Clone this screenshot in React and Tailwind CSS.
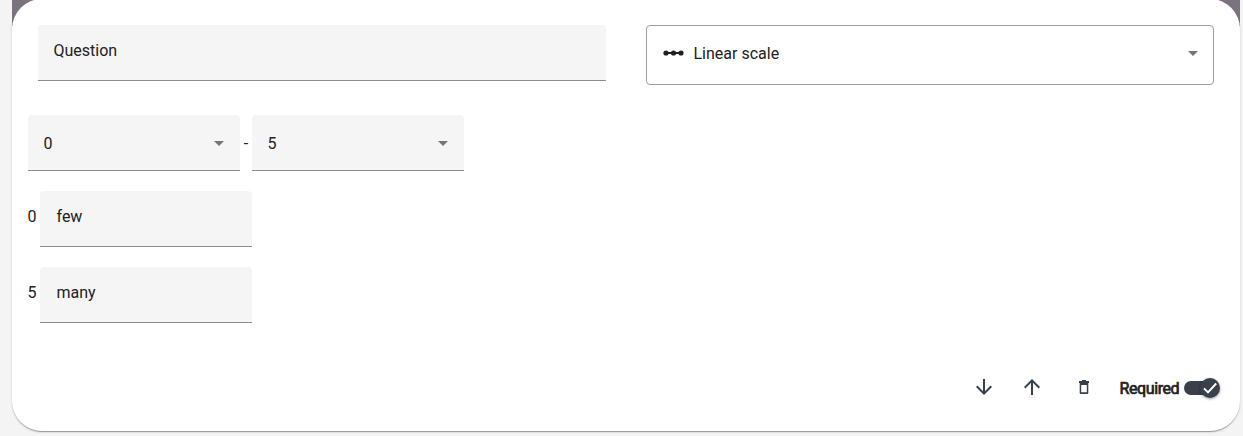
import React from "react";

function Caret({ className = "" }) {
  return (
    <svg width="10" height="5" viewBox="0 0 10 5" className={`shrink-0 ${className}`} fill="#757575">
      <path d="M0 0l5 5 5-5z" />
    </svg>
  );
}

function FilledInput({ text, className }) {
  return (
    <div className={`h-14 rounded-t border-b border-[#8c8c8c] bg-[#f5f5f5] pt-[14px] ${className}`}>
      {text}
    </div>
  );
}

function FilledSelect({ text }) {
  return (
    <div className="flex h-14 w-[212px] items-center justify-between rounded-t border-b border-[#8c8c8c] bg-[#f5f5f5] pr-4 pl-[15.5px]">
      <span className="pt-[2px]">{text}</span>
      <Caret className="mt-[2px]" />
    </div>
  );
}

function ScaleLabel({ value, text, className }) {
  return (
    <div className={`flex ${className}`}>
      <span className="-ml-[0.5px] w-[12.5px] pt-[14px]">{value}</span>
      <FilledInput text={text} className="w-[212px] pl-[16.5px]" />
    </div>
  );
}

export default function App() {
  return (
    <div className="h-[436px] overflow-hidden bg-[#f4f4f4] pr-[3px] pl-3 font-['Roboto',sans-serif] text-base leading-6 text-[#212121]">
      <div className="h-[436px] bg-[linear-gradient(#7b737d_27px,transparent_27px)]">
        <main className="-mt-px flex h-[432px] flex-col rounded-[30px] bg-white shadow-[0_2px_1px_-1px_rgba(0,0,0,0.2),0_1px_1px_0_rgba(0,0,0,0.14),0_1px_3px_0_rgba(0,0,0,0.12)]">
          <div className="flex gap-10 pt-[26px] pr-[26px] pl-[26px]">
            <FilledInput text="Question" className="w-[568px] pl-[15.5px]" />
            <div className="flex h-[60px] w-[568px] items-center rounded border border-[#9e9e9e] pr-[15px] pl-[16px]">
              <svg width="21" height="6" viewBox="0 0 21 6" className="mt-[-4px] mr-[9.5px]" fill="#212121">
                <path d="M2 2h17v2H2z" />
                <circle cx="3" cy="3" r="2.6" />
                <circle cx="10.5" cy="3" r="2.6" />
                <circle cx="18" cy="3" r="2.6" />
              </svg>
              <span className="mt-[-3px] flex-1">Linear scale</span>
              <Caret className="-mt-[3px]" />
            </div>
          </div>
          <div className="flex items-center pt-[30px] pl-4">
            <FilledSelect text="0" />
            <span className="w-3 pt-[1px] text-center">-</span>
            <FilledSelect text="5" />
          </div>
          <ScaleLabel value="0" text="few" className="mt-5 pl-4" />
          <ScaleLabel value="5" text="many" className="mt-5 pl-4" />
          <div className="mt-auto mb-[31px] flex h-6 items-center justify-end pr-5 text-[#37404b]">
            <svg width="16" height="16" viewBox="4 4 16 16" className="mr-8 mt-[-2px]" fill="currentColor">
              <path d="M20 12l-1.41-1.41L13 16.17V4h-2v12.17l-5.58-5.59L4 12l8 8 8-8z" />
            </svg>
            <svg width="16" height="16" viewBox="4 4 16 16" className="mr-[39px] mt-[-2px]" fill="currentColor">
              <path d="M4 12l1.41 1.41L11 7.83V20h2V7.83l5.58 5.59L20 12l-8-8-8 8z" />
            </svg>
            <svg width="10" height="14" viewBox="0 0 10 14" className="mt-[-2px]" fill="currentColor">
              <path fillRule="evenodd" d="M3 0h4v1h3v2H9.3v10a1 1 0 0 1-1 1H1.7a1 1 0 0 1-1-1V3H0V1h3zM2.2 5v7.3h5.6V5z" />
            </svg>
            <span className="ml-[30.5px] flex w-[64.5px] pt-[1px] tracking-[-0.4px] text-[#212121] [-webkit-text-stroke:0.7px_#212121]">
              Required
            </span>
            <span className="flex h-[14px] w-9 items-center justify-end rounded-full bg-[linear-gradient(to_right,#37404b_27px,transparent_27px)]">
              <span className="flex size-5 items-center justify-center rounded-full bg-[#37404b] shadow-[0_1px_3px_rgba(0,0,0,0.4)]">
                <svg width="14" height="12" viewBox="0 0 14 12" fill="none" stroke="white" strokeWidth="1.9">
                  <path d="M1 6.3l4 4L13.2 1.5" />
                </svg>
              </span>
            </span>
          </div>
        </main>
      </div>
    </div>
  );
}
